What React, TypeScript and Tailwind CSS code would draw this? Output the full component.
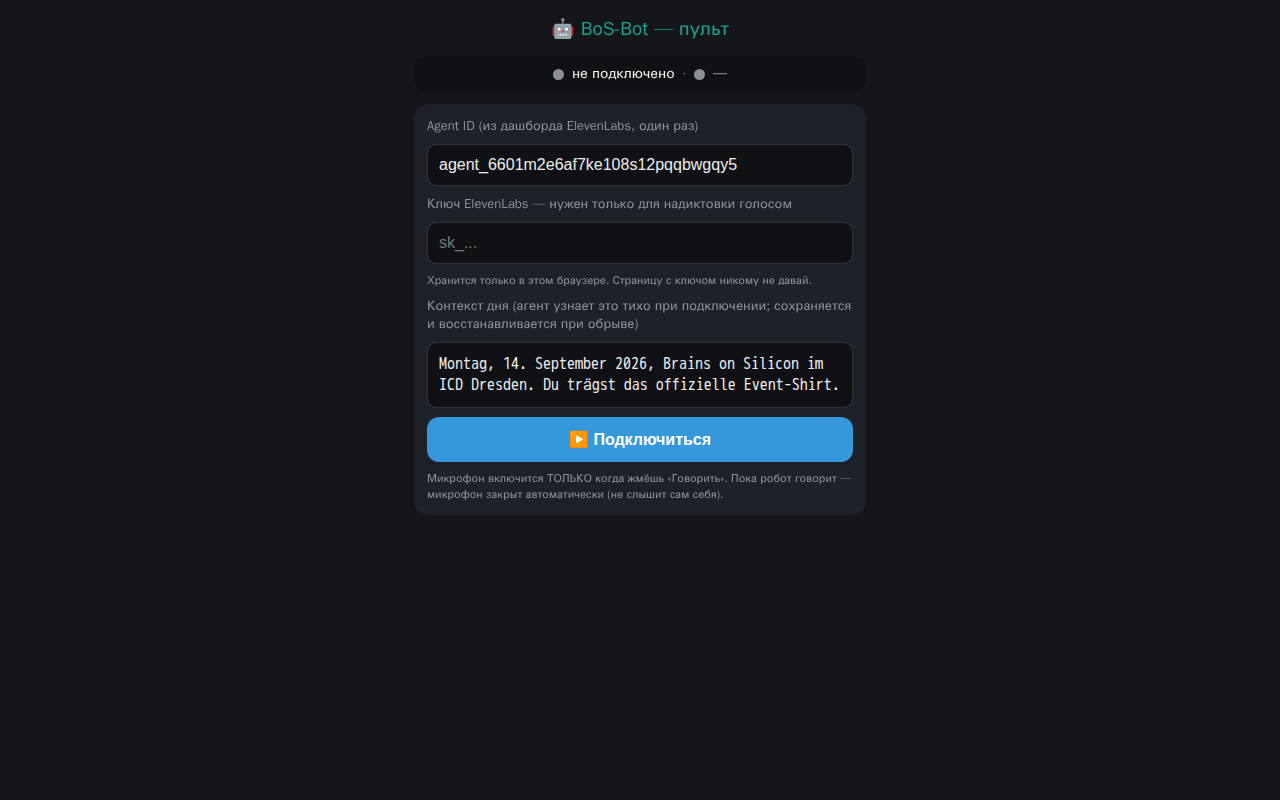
import { useState } from 'react';

const labelClass = 'block text-[13px] leading-[18px] text-[#8b9098]';
const hintClass = '-mt-px text-[11px] leading-4 text-[#8b9098]';
const fieldClass =
  'block w-full rounded-[10px] border border-[#2d3436] bg-[#0f1114] px-[11px] text-base text-[#eeeeee] placeholder:text-[#757575]';

function Dot() {
  return <span className="size-[11px] rounded-full bg-[#8b9098]" />;
}

export default function App() {
  const [agentId, setAgentId] = useState('agent_6601m2e6af7ke108s12pqqbwgqy5');
  const [apiKey, setApiKey] = useState('');
  const [context, setContext] = useState(
    'Montag, 14. September 2026, Brains on Silicon im ICD Dresden. Du trägst das offizielle Event-Shirt.'
  );

  return (
    <div className="min-h-screen bg-[#14161a] p-3.5 font-['WenQuanYi_Zen_Hei','Liberation_Sans',sans-serif] text-[#eeeeee]">
      <main className="mx-auto flex max-w-[452px] flex-col gap-3">
        <h1 className="text-center text-[19px] leading-[30px] text-[#1aa08f]">🤖 BoS-Bot — пульт</h1>

        <div className="flex h-9 items-center justify-center gap-2 rounded-xl bg-[#0f1114] text-sm">
          <Dot />
          <span>не подключено</span>
          <span className="text-[#8b9098]">·</span>
          <Dot />
          <span>—</span>
        </div>

        <section className="flex flex-col gap-[9px] rounded-[14px] bg-[#1e2228] p-[13px]">
          <label htmlFor="agent" className={labelClass}>
            Agent ID (из дашборда ElevenLabs, один раз)
          </label>
          <input
            id="agent"
            type="text"
            value={agentId}
            onChange={(e) => setAgentId(e.target.value)}
            className={`${fieldClass} h-[42px] font-['Liberation_Sans',sans-serif]`}
          />

          <label htmlFor="key" className={labelClass}>
            Ключ ElevenLabs — нужен только для надиктовки голосом
          </label>
          <input
            id="key"
            type="password"
            placeholder="sk_..."
            value={apiKey}
            onChange={(e) => setApiKey(e.target.value)}
            className={`${fieldClass} h-[42px] font-['Liberation_Sans',sans-serif]`}
          />
          <p className={hintClass}>Хранится только в этом браузере. Страницу с ключом никому не давай.</p>

          <label htmlFor="context" className={labelClass}>
            Контекст дня (агент узнает это тихо при подключении; сохраняется и восстанавливается при обрыве)
          </label>
          <textarea
            id="context"
            rows={2}
            value={context}
            onChange={(e) => setContext(e.target.value)}
            className={`${fieldClass} resize-none overflow-hidden py-[11px] font-['WenQuanYi_Zen_Hei_Mono','Liberation_Mono',monospace] leading-[21px]`}
          />

          <button
            type="button"
            className="h-[45px] w-full rounded-xl bg-[#3498db] font-['Liberation_Sans',sans-serif] text-base font-bold text-white"
          >
            ▶️ Подключиться
          </button>
          <p className={hintClass}>
            Микрофон включится ТОЛЬКО когда жмёшь «Говорить». Пока робот говорит — микрофон закрыт автоматически (не
            слышит сам себя).
          </p>
        </section>
      </main>
    </div>
  );
}
